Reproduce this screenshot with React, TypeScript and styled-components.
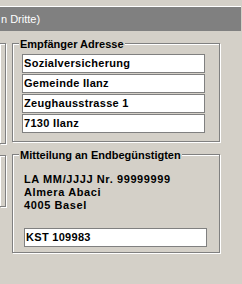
import styled, { createGlobalStyle } from 'styled-components';

const GlobalStyle = createGlobalStyle`
  html, body {
    margin: 0;
    padding: 0;
    background: #d4d0c8;
    overflow: hidden;
  }
  body {
    font-family: "Liberation Sans", Arial, sans-serif;
    font-size: 11px;
    color: #000;
  }
`;

const Page = styled.div`
  width: 242px;
  height: 284px;
  padding-top: 6px;
  box-sizing: border-box;
`;

const TitleBar = styled.div`
  width: 241px;
  height: 24px;
  border-top: 1px solid #fff;
  background: #808080;
  color: #fff;
  font-size: 11px;
  line-height: 24px;
  white-space: nowrap;
  overflow: hidden;
`;

const TitleText = styled.span`
  display: block;
  padding-left: 1px;
`;

const Content = styled.div`
  display: flex;
  gap: 6px;
  margin-top: 12px;
`;

const LeftColumn = styled.div`
  display: flex;
  flex-direction: column;
  gap: 11px;
`;

const etched = `
  border: 1px solid #808080;
  box-shadow: inset 1px 1px 0 #fff, 1px 1px 0 #fff;
  box-sizing: border-box;
`;

const CutBox = styled.div<{ $h: number }>`
  ${etched}
  border-left: none;
  width: 6px;
  height: ${p => p.$h}px;
`;

const RightColumn = styled.div`
  display: flex;
  flex-direction: column;
  gap: 12px;
`;

const Group = styled.div<{ $pl: number; $pt: number }>`
  ${etched}
  position: relative;
  width: 208px;
  height: 99px;
  padding: ${p => p.$pt}px 0 0 ${p => p.$pl}px;
  display: flex;
  flex-direction: column;
  gap: 1px;
`;

const Legend = styled.span`
  position: absolute;
  left: 6px;
  top: -6px;
  padding: 0 1px;
  background: #d4d0c8;
  font-weight: bold;
  line-height: 13px;
  white-space: nowrap;
`;

const Field = styled.div<{ $mt?: number }>`
  width: 183px;
  height: 19px;
  box-sizing: border-box;
  margin-top: ${p => p.$mt ?? 0}px;
  border: 1px solid #808080;
  background: #fff;
  padding-left: 1px;
  font-weight: bold;
  line-height: 17px;
  letter-spacing: 0.3px;
  white-space: nowrap;
`;

const Lines = styled.div`
  font-weight: bold;
  line-height: 13px;
  letter-spacing: 0.6px;
  white-space: nowrap;
`;

export default function App() {
  const address = ['Sozialversicherung', 'Gemeinde Ilanz', 'Zeughausstrasse 1', '7130 Ilanz'];
  return (
    <>
      <GlobalStyle />
      <Page>
        <TitleBar>
          <TitleText>n Dritte)</TitleText>
        </TitleBar>
        <Content>
          <LeftColumn>
            <CutBox $h={101} />
            <CutBox $h={52} />
          </LeftColumn>
          <RightColumn>
            <Group $pl={9} $pt={10}>
              <Legend>Empfänger Adresse</Legend>
              {address.map(a => (
                <Field key={a}>{a}</Field>
              ))}
            </Group>
            <Group $pl={11} $pt={18}>
              <Legend>Mitteilung an Endbegünstigten</Legend>
              <Lines>
                <div>LA MM/JJJJ Nr. 99999999</div>
                <div>Almera Abaci</div>
                <div>4005 Basel</div>
              </Lines>
              <Field $mt={15}>KST 109983</Field>
            </Group>
          </RightColumn>
        </Content>
      </Page>
    </>
  );
}
